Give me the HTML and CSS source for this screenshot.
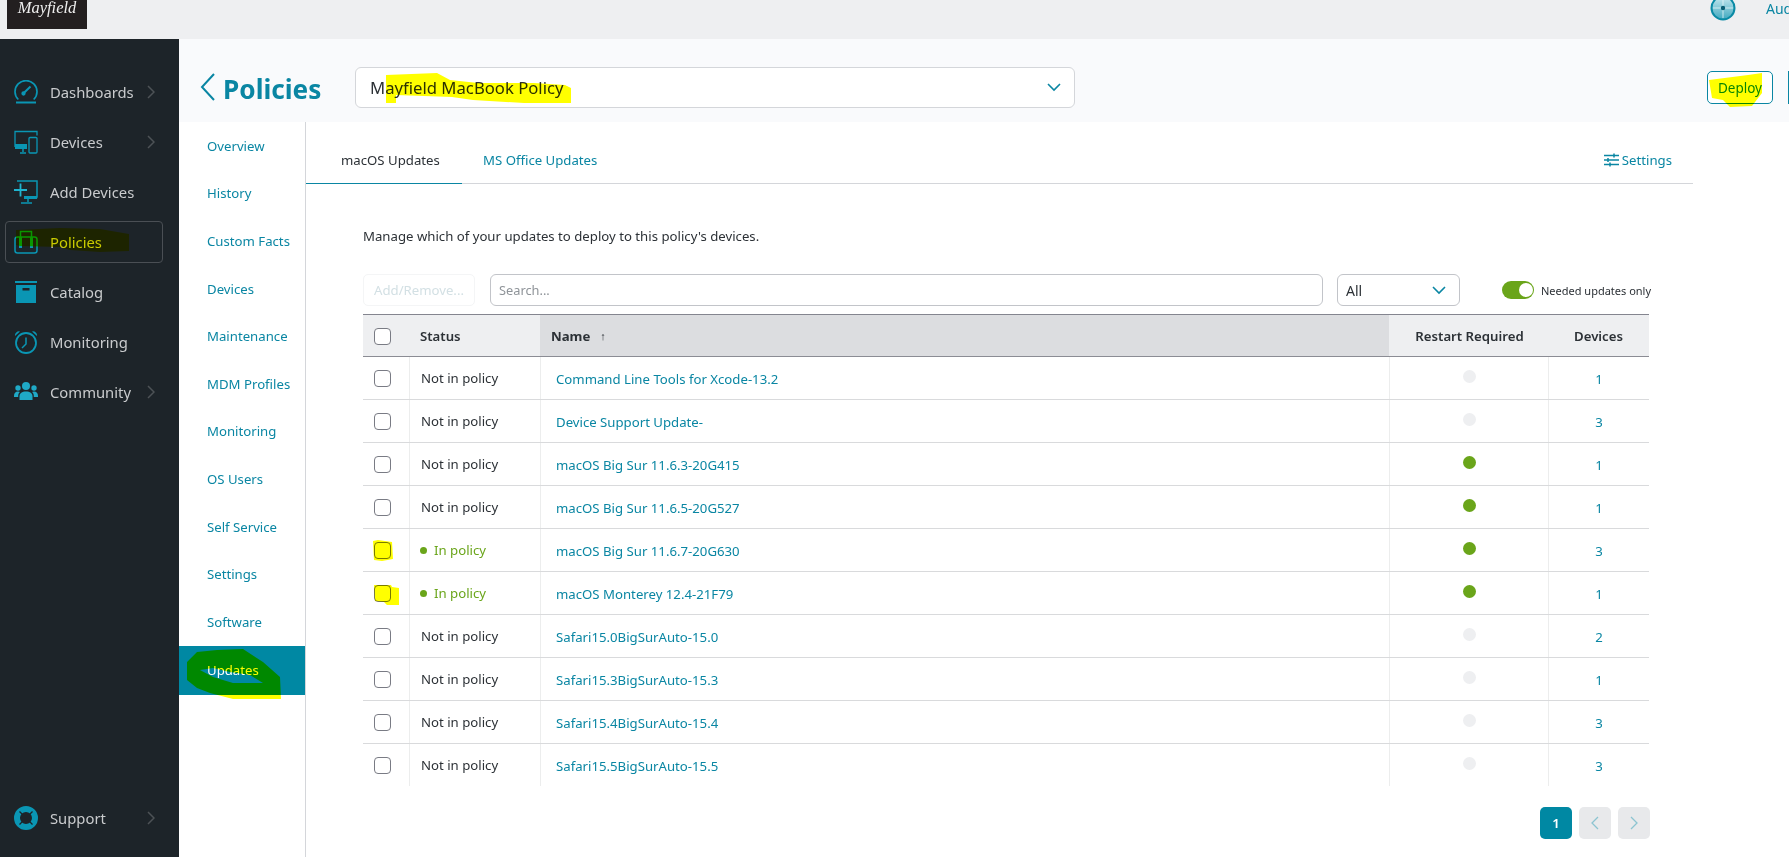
FILE: index.html
```html
<!DOCTYPE html>
<html lang="en">
<head>
<meta charset="utf-8">
<title>Policies</title>
<link rel="stylesheet" href="styles.css">
</head>
<body>
<header class="topbar">
  <div class="logo"><span>Mayfield</span></div>
  <div class="top-right">
    <svg class="audit-icon" width="26" height="26" viewBox="0 0 26 26"><defs><linearGradient id="g" x1="0" y1="0" x2="0" y2="1"><stop offset="0" stop-color="#c6e8ef"/><stop offset="1" stop-color="#3fa8bf"/></linearGradient></defs><circle cx="13" cy="13" r="11.500" fill="url(#g)" stroke="#0a8aa5" stroke-width="2"/><path d="M13 3v20M3 13h20" stroke="#e6f6f9" stroke-width="0.800"/><circle cx="13" cy="13" r="2.200" fill="#0a5f75"/></svg>
    <span class="audit-text">Audit</span>
  </div>
</header>
<div class="app">
  <nav class="sidebar">
    <a class="side-item">
      <svg class="side-icon" viewBox="0 0 24 24" fill="none" stroke="#0a96b4" stroke-width="1.700"><path d="M4.300 19.500A11 11 0 1 1 19.700 19.500"/><path d="M9.300 13.500 16.500 6.500" stroke-width="2"/><circle cx="9.500" cy="13.500" r="1.300" fill="#0a96b4"/><path d="M2 22.500h20" stroke-width="2"/></svg>
      <span class="side-label">Dashboards</span><svg class="side-chev" viewBox="0 0 8 14"><path d="M1 1l6 6-6 6"/></svg>
    </a>
    <a class="side-item">
      <svg class="side-icon" viewBox="0 0 24 24" fill="none" stroke="#0a96b4" stroke-width="1.300"><path d="M23 5.500v-4H1V17"/><path d="M1 14h12v5H1z" fill="#0a96b4" stroke="none"/><path d="M9 19v3M6 23h6" stroke-width="1.500"/><rect x="15" y="7.500" width="8" height="15.500" rx="1"/></svg>
      <span class="side-label">Devices</span><svg class="side-chev" viewBox="0 0 8 14"><path d="M1 1l6 6-6 6"/></svg>
    </a>
    <a class="side-item">
      <svg class="side-icon" viewBox="0 0 24 24" fill="none" stroke="#0a96b4" stroke-width="1.500"><path d="M3 1h20v16a1 1 0 0 1-1 1H12"/><path d="M0 10h13M6.500 3.500v13" stroke-width="1.800" stroke="#1fb4cf"/><path d="M10 16h13v3H10z" fill="#0a96b4" stroke="none"/><path d="M14 19v3M7 23h11"/></svg>
      <span class="side-label">Add Devices</span>
    </a>
    <a class="side-item side-active">
      <svg class="side-icon" viewBox="0 0 24 24" fill="none" stroke="#0a96b4" stroke-width="1.500"><rect x="1" y="7" width="22" height="16" rx="2.500"/><path d="M6.500 7V1.500h11V7"/><path d="M5 7h3v11H5zM16 7h3v11h-3z" fill="#0a96b4" stroke="none"/></svg>
      <span class="side-label">Policies</span>
    </a>
    <a class="side-item">
      <svg class="side-icon" viewBox="0 0 24 24"><path d="M1 1h22v2H1z" fill="#0a96b4"/><path d="M2 5h20v18H2z" fill="#0a96b4"/><path d="M8.500 8h7v2.500h-7z" fill="#1d2429"/></svg>
      <span class="side-label">Catalog</span>
    </a>
    <a class="side-item">
      <svg class="side-icon" viewBox="0 0 24 24" fill="none" stroke="#0a96b4" stroke-width="1.800"><circle cx="12" cy="13" r="10"/><path d="M12 7.500V14l-4 4" stroke-width="1.500"/><path d="M1 6a4 4 0 0 1 5-4.500zM23 6a4 4 0 0 0-5-4.500z" fill="#0a96b4" stroke="none"/></svg>
      <span class="side-label">Monitoring</span>
    </a>
    <a class="side-item">
      <svg class="side-icon" viewBox="0 0 24 24" fill="#1fa9c6"><circle cx="12" cy="6" r="4"/><circle cx="4" cy="8" r="2.700"/><circle cx="20" cy="8" r="2.700"/><path d="M5.500 20v-3.500C5.500 13 8 11.500 12 11.500s6.500 1.500 6.500 5V20z"/><path d="M0 16c0-3 1.500-4.500 4-4.500 1 0 1.500.2 2 .6-1.300 1-1.800 2.400-1.800 4V17H0zM24 16c0-3-1.500-4.500-4-4.500-1 0-1.500.2-2 .6 1.300 1 1.800 2.400 1.800 4V17H24z"/></svg>
      <span class="side-label">Community</span><svg class="side-chev" viewBox="0 0 8 14"><path d="M1 1l6 6-6 6"/></svg>
    </a>
    <a class="side-item side-bottom">
      <svg class="side-icon" viewBox="0 0 24 24" fill="none"><circle cx="12" cy="12" r="9" stroke="#0a96b4" stroke-width="6"/><path d="M5.500 5.500l3 3M18.500 5.500l-3 3M5.500 18.500l3-3M18.500 18.500l-3-3" stroke="#1d2429" stroke-width="1.300"/></svg>
      <span class="side-label">Support</span><svg class="side-chev" viewBox="0 0 8 14"><path d="M1 1l6 6-6 6"/></svg>
    </a>
  </nav>
  <div class="content">
    <div class="page-head">
      <svg class="back" width="16" height="28" viewBox="0 0 16 28" fill="none" stroke="#0a86a3" stroke-width="2"><path d="M14 1 2 14l12 13"/></svg>
      <h1 class="title">Policies</h1>
      <div class="policy-select"><span>Mayfield MacBook Policy</span><svg width="14" height="9" viewBox="0 0 14 9" fill="none" stroke="#0a86a3" stroke-width="1.600"><path d="M1 1l6 6 6-6"/></svg></div>
      <div class="head-actions">
        <button class="deploy">Deploy</button>
        <span class="next-btn"></span>
      </div>
    </div>
    <div class="page-body">
      <aside class="subnav">
        <a>Overview</a><a>History</a><a>Custom Facts</a><a>Devices</a><a>Maintenance</a><a>MDM Profiles</a><a>Monitoring</a><a>OS Users</a><a>Self Service</a><a>Settings</a><a>Software</a><a class="sub-active">Updates</a>
      </aside>
      <main class="panel">
        <div class="tabs">
          <a class="tab tab-active">macOS Updates</a>
          <a class="tab">MS Office Updates</a>
          <a class="tab-settings"><svg width="15" height="14" viewBox="0 0 15 14" fill="none" stroke="#0a86a3" stroke-width="1.300"><path d="M0 2.500h15M0 7h15M0 11.500h15"/><path d="M10 0.500v4M4 5v4M6 9.500v4" stroke-width="1.500"/></svg>Settings</a>
        </div>
        <div class="updates">
          <p class="intro">Manage which of your updates to deploy to this policy's devices.</p>
          <div class="toolbar">
            <button class="add-btn">Add/Remove...</button>
            <div class="search">Search...</div>
            <div class="filter"><span>All</span><svg width="14" height="9" viewBox="0 0 14 9" fill="none" stroke="#0a86a3" stroke-width="1.600"><path d="M1 1l6 6 6-6"/></svg></div>
            <div class="needed"><span class="toggle"></span><span>Needed updates only</span></div>
          </div>
          <div class="table">
            <div class="row head">
              <div class="c-check"><span class="box"></span></div>
              <div class="c-status">Status</div>
              <div class="c-name sorted"><b>Name</b><span class="arrow">↑</span></div>
              <div class="c-restart">Restart Required</div>
              <div class="c-devices">Devices</div>
            </div>
            <div class="row"><div class="c-check"><span class="box"></span></div><div class="c-status">Not in policy</div><div class="c-name"><a>Command Line Tools for Xcode-13.2</a></div><div class="c-restart"><i class="dot"></i></div><div class="c-devices"><a>1</a></div></div>
            <div class="row"><div class="c-check"><span class="box"></span></div><div class="c-status">Not in policy</div><div class="c-name"><a>Device Support Update-</a></div><div class="c-restart"><i class="dot"></i></div><div class="c-devices"><a>3</a></div></div>
            <div class="row"><div class="c-check"><span class="box"></span></div><div class="c-status">Not in policy</div><div class="c-name"><a>macOS Big Sur 11.6.3-20G415</a></div><div class="c-restart"><i class="dot dot-on"></i></div><div class="c-devices"><a>1</a></div></div>
            <div class="row"><div class="c-check"><span class="box"></span></div><div class="c-status">Not in policy</div><div class="c-name"><a>macOS Big Sur 11.6.5-20G527</a></div><div class="c-restart"><i class="dot dot-on"></i></div><div class="c-devices"><a>1</a></div></div>
            <div class="row"><div class="c-check"><span class="box"></span></div><div class="c-status in"><i class="mini"></i>In policy</div><div class="c-name"><a>macOS Big Sur 11.6.7-20G630</a></div><div class="c-restart"><i class="dot dot-on"></i></div><div class="c-devices"><a>3</a></div></div>
            <div class="row"><div class="c-check"><span class="box"></span></div><div class="c-status in"><i class="mini"></i>In policy</div><div class="c-name"><a>macOS Monterey 12.4-21F79</a></div><div class="c-restart"><i class="dot dot-on"></i></div><div class="c-devices"><a>1</a></div></div>
            <div class="row"><div class="c-check"><span class="box"></span></div><div class="c-status">Not in policy</div><div class="c-name"><a>Safari15.0BigSurAuto-15.0</a></div><div class="c-restart"><i class="dot"></i></div><div class="c-devices"><a>2</a></div></div>
            <div class="row"><div class="c-check"><span class="box"></span></div><div class="c-status">Not in policy</div><div class="c-name"><a>Safari15.3BigSurAuto-15.3</a></div><div class="c-restart"><i class="dot"></i></div><div class="c-devices"><a>1</a></div></div>
            <div class="row"><div class="c-check"><span class="box"></span></div><div class="c-status">Not in policy</div><div class="c-name"><a>Safari15.4BigSurAuto-15.4</a></div><div class="c-restart"><i class="dot"></i></div><div class="c-devices"><a>3</a></div></div>
            <div class="row last"><div class="c-check"><span class="box"></span></div><div class="c-status">Not in policy</div><div class="c-name"><a>Safari15.5BigSurAuto-15.5</a></div><div class="c-restart"><i class="dot"></i></div><div class="c-devices"><a>3</a></div></div>
          </div>
          <div class="pager">
            <span class="pg pg-on">1</span>
            <span class="pg"><svg width="8" height="14" viewBox="0 0 8 14" fill="none" stroke="#8cc4d1" stroke-width="1.300"><path d="M7 1 1 7l6 6"/></svg></span>
            <span class="pg"><svg width="8" height="14" viewBox="0 0 8 14" fill="none" stroke="#8cc4d1" stroke-width="1.300"><path d="M1 1l6 6-6 6"/></svg></span>
          </div>
        </div>
      </main>
    </div>
  </div>
</div>
<svg class="marker" width="1789" height="857" viewBox="0 0 1789 857" fill="#ffff00">
  <path d="M16 230 60 228 100 229 129 234V251L100 252 70 250 60 247 20 246 16 245Z"/>
  <path d="M386 75 437 73 450 80 478 83 534 83 565 85 571 88V103H524L473 100 452 97 396 95V103H386Z"/>
  <path d="M1709 80 1748 75 1762 73V93L1752 106 1730 107 1723 100 1712 98Z"/>
  <path d="M373 541 378 540 392 542 393 559 382 561 374 560Z"/>
  <path d="M374 585H391L392 587 399 588V605H387L384 602 375 601Z"/>
  <path fill-rule="evenodd" d="M197 652 217 650 243 649 263 662 280 677 281 699H233L210 693 197 688 187 680V662ZM200 670 213 668 230 672 250 675 263 683H233L213 677Z"/>
</svg>
</body>
</html>
```
FILE: styles.css
```css
* { box-sizing: border-box; }
html, body { margin: 0; height: 100%; }
body { width: 1789px; height: 857px; overflow: hidden; font-family: "Noto Sans", "Open Sans", sans-serif; font-size: 13.200px; color: #2c3136; background: #fff; position: relative; }
a { color: #0a86a3; text-decoration: none; }

.topbar { height: 39px; background: #eeeff1; display: flex; justify-content: space-between; align-items: flex-start; padding-left: 7px; overflow: hidden; }
.logo { width: 80px; height: 29px; background: #231f20; color: #eee; font-family: "Liberation Serif", serif; font-style: italic; font-size: 16.500px; text-align: center; line-height: 15px; overflow: hidden; }
.top-right { display: flex; align-items: center; gap: 30px; margin-top: -5px; width: 79px; flex: none; }
.audit-icon { flex: none; }
.audit-text { color: #0a86a3; font-size: 14px; white-space: nowrap; }

.app { display: flex; height: 818px; }
.sidebar { width: 179px; flex: none; background: #1d2429; display: flex; flex-direction: column; padding: 32px 5px 18px; gap: 8px; }
.side-item { display: flex; align-items: center; height: 42px; padding: 0 8px; color: #c9cbcd; font-size: 14.800px; border: 1px solid transparent; border-radius: 4px; width: 158px; flex: none; }
.side-active { border-color: #4a4f54; }
.side-bottom { margin-top: auto; }
.side-icon { width: 24px; height: 24px; flex: none; margin-right: 12px; margin-top: -1px; }
.side-label { flex: 1; }
.side-chev { width: 8px; height: 14px; fill: none; stroke: #4d5256; stroke-width: 1.500; flex: none; margin-right: -1px; }

.content { flex: 1; display: flex; flex-direction: column; min-width: 0; }
.page-head { height: 83px; background: #f9fafc; display: flex; align-items: center; padding: 14px 0 0 21px; flex: none; }
.back { flex: none; margin: 0 7px 2px 0; }
.title { margin: 2px 0 0; font-size: 26.200px; font-weight: 700; color: #0a86a3; width: 132px; flex: none; }
.policy-select { width: 720px; height: 41px; background: #fff; border: 1px solid #d4d6da; border-radius: 6px; display: flex; align-items: center; justify-content: space-between; padding: 0 13px 0 14px; font-size: 16.700px; color: #2c3136; flex: none; }
.head-actions { margin-left: auto; display: flex; align-items: center; gap: 15px; }
.deploy { width: 66px; height: 33px; background: #fff; border: 1px solid #0a86a3; border-radius: 5px; color: #0a86a3; font: inherit; font-size: 13.500px; padding: 0; }
.next-btn { width: 1px; height: 33px; border-left: 1px solid #0a86a3; }

.page-body { flex: 1; display: flex; min-height: 0; }
.subnav { width: 127px; flex: none; border-right: 1px solid #d4d6da; display: flex; flex-direction: column; }
.subnav a { display: flex; align-items: center; height: 47.600px; padding-left: 28px; flex: none; }
.subnav .sub-active { background: #0088a3; color: #fff; height: 49px; }

.panel { flex: 1; min-width: 0; }
.tabs { width: 1387px; height: 62px; border-bottom: 1px solid #d4d6da; display: flex; align-items: stretch; }
.tab { display: flex; align-items: center; padding: 14px 21px 0; margin-bottom: -1px; border-bottom: 1px solid transparent; }
.tab-active { color: #2c3136; width: 156px; padding-left: 35px; padding-right: 0; border-bottom-color: #0a86a3; }
.tab-settings { margin-left: auto; display: flex; align-items: center; gap: 3px; padding-top: 14px; margin-right: 21px; }
.updates { padding-left: 57px; width: 1345px; }
.intro { margin: 0; padding-top: 43px; height: 90px; line-height: 18px; color: #2c3136; }
.toolbar { display: flex; align-items: center; height: 32px; margin-bottom: 8px; }
.add-btn { width: 112px; height: 32px; background: #fff; border: 1px solid #f4f5f6; border-radius: 5px; color: #d3e0e4; font: inherit; padding: 0; margin-right: 15px; flex: none; }
.search { width: 833px; height: 32px; border: 1px solid #c2c4c9; border-radius: 6px; padding-left: 8px; display: flex; align-items: center; color: #8f9499; font-size: 12.800px; margin-right: 14px; flex: none; }
.filter { width: 123px; height: 32px; border: 1px solid #c2c4c9; border-radius: 6px; display: flex; align-items: center; justify-content: space-between; padding: 0 13px 0 8px; font-size: 14px; margin-right: 42px; flex: none; }
.needed { display: flex; align-items: center; gap: 7px; font-size: 11px; white-space: nowrap; flex: none; }
.toggle { width: 32px; height: 18px; border-radius: 9px; background: #6aa51a; position: relative; flex: none; }
.toggle::after { content: ""; position: absolute; right: 1px; top: 2px; width: 14px; height: 14px; border-radius: 50%; background: #fff; }

.table { width: 1286px; border-top: 1px solid #84858f; }
.row { display: grid; grid-template-columns: 46px 131px 849px 159px 101px; height: 43px; border-bottom: 1px solid #d9dadc; }
.row.last { border-bottom: 0; height: 42px; }
.row > div { display: flex; align-items: center; }
.row:not(.head) .c-status, .row:not(.head) .c-name, .row:not(.head) .c-devices, .row:not(.head) .c-restart { border-left: 1px solid #eceded; }
.row:not(.head) .c-restart, .row .c-devices { justify-content: center; }
.row:not(.head) .c-name { padding-top: 2px; }
.row:not(.head) .c-devices { padding-top: 2px; }
.row:not(.head) .c-name a { padding-left: 15px; }
.c-check { padding-left: 11px; }
.c-status { padding-left: 11px; }
.box { width: 17px; height: 17px; border: 1px solid #797b84; border-radius: 4px; background: #fff; margin-top: 1px; }
.head { height: 42px; background: #eeeff1; border-bottom: 1px solid #8b8c94; font-weight: 600; }
.head .c-name { background: #dcdde0; padding-left: 11px; }
.head .c-name b { font-weight: 700; }
.head .arrow { margin-left: 10px; font-weight: 400; font-size: 11px; }
.head .c-restart { justify-content: center; padding-left: 2px; }
.row .in { color: #6aa51a; padding-left: 10px; }
.mini { width: 7px; height: 7px; border-radius: 50%; background: #6aa51a; margin-right: 7px; flex: none; }
.dot { width: 13px; height: 13px; border-radius: 50%; background: #eeeff1; margin-bottom: 3px; }
.dot-on { background: #6aa51a; }

.pager { display: flex; justify-content: flex-end; gap: 7px; width: 1287px; margin-top: 21px; }
.pg { width: 32px; height: 32px; border-radius: 5px; background: #e8e9eb; display: flex; align-items: center; justify-content: center; }
.pg-on { background: #0088a3; color: #fff; font-weight: 600; }

.marker { position: absolute; left: 0; top: 0; mix-blend-mode: multiply; pointer-events: none; }
```
